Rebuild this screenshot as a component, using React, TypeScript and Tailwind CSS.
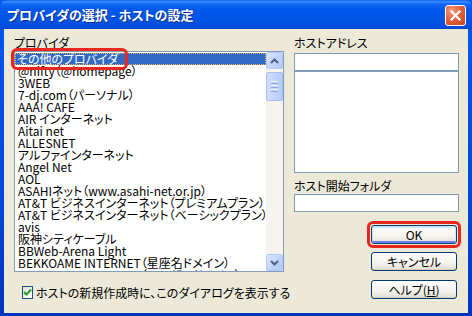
import React from "react";

const FONT = "font-['Noto_Sans_CJK_JP','Noto_Sans_CJK_SC',sans-serif] [font-feature-settings:'palt']";

const items = [
  "@nifty（@homepage）",
  "3WEB",
  "7-dj.com（パーソナル）",
  "AAA! CAFE",
  "AIR インターネット",
  "Aitai net",
  "ALLESNET",
  "アルファインターネット",
  "Angel Net",
  "AOL",
  "ASAHIネット（www.asahi-net.or.jp）",
  "AT&T ビジネスインターネット（プレミアムプラン）",
  "AT&T ビジネスインターネット（ベーシックプラン）",
  "avis",
  "阪神シティケーブル",
  "BBWeb-Arena Light",
  "BEKKOAME INTERNET（星座名ドメイン）",
  "BEKKOAME INTERNET（ユーザードメイン）",
];

function ScrollBtn({ down }: { down?: boolean }) {
  return (
    <div className="h-[17px] w-[17px] rounded-[2px] border border-[#B4C8F6] bg-[linear-gradient(135deg,#DCE6FE_0%,#C3D4FC_50%,#B2C7F8_100%)] flex items-center justify-center">
      <svg width="9" height="6" viewBox="0 0 9 6">
        {down ? (
          <path d="M1 1 L4.5 4.5 L8 1" stroke="#4D6185" strokeWidth="2" fill="none" />
        ) : (
          <path d="M1 5 L4.5 1.5 L8 5" stroke="#4D6185" strokeWidth="2" fill="none" />
        )}
      </svg>
    </div>
  );
}

function ScrollBar() {
  return (
    <div className="w-[17px] h-full flex flex-col bg-[#F5F4EF]">
      <ScrollBtn />
      <div className="mt-[3px] h-[29px] w-[17px] rounded-[2px] border border-[#A8BEEF] bg-[linear-gradient(90deg,#D0DDFD_0%,#C4D5FC_50%,#B8CBF9_100%)] flex flex-col items-center justify-center gap-[1px]">
        <div className="w-[7px] h-[1px] bg-[#EEF3FF]" />
        <div className="w-[7px] h-[1px] bg-[#8CA5E2]" />
        <div className="w-[7px] h-[1px] bg-[#EEF3FF]" />
        <div className="w-[7px] h-[1px] bg-[#8CA5E2]" />
        <div className="w-[7px] h-[1px] bg-[#EEF3FF]" />
        <div className="w-[7px] h-[1px] bg-[#8CA5E2]" />
      </div>
      <div className="flex-1" />
      <ScrollBtn down />
    </div>
  );
}

function XPButton({ children, def }: { children: React.ReactNode; def?: boolean }) {
  return (
    <div
      className={
        "h-[19px] w-[86px] rounded-[3px] border border-[#003C74] bg-[linear-gradient(180deg,#FFFFFF_0%,#F4F3EE_60%,#E6E3D9_90%,#D6D0C5_100%)] flex items-center justify-center text-[12px] leading-[12px] text-black " +
        (def
          ? "shadow-[inset_0_1px_0_1px_#CEE7FF,inset_0_-1px_0_1px_#6982EE]"
          : "shadow-[inset_0_-1px_0_0_#D6D0C5]")
      }
    >
      {children}
    </div>
  );
}

export default function App() {
  return (
    <div className={"w-[472px] h-[316px] flex flex-col bg-[linear-gradient(180deg,#0058EE_0%,#0049DA_60%,#0035BC_100%)] text-black " + FONT}>
      {/* Title bar */}
      <div className="h-[29px] flex items-start rounded-t-[7px] bg-[linear-gradient(180deg,#0A5DEC_0%,#3C8FFD_6%,#1467F5_14%,#0058EE_30%,#0055E8_60%,#0050E0_85%,#0046D2_100%)]">
        <div className="pl-[7px] pt-[7px] text-[13px] leading-[15px] font-bold text-white [text-shadow:1px_1px_0_#0B2C8A]">
          プロバイダの選択 - ホストの設定
        </div>
        <div className="flex-1" />
        <div className="mt-[5px] mr-[6px] h-[21px] w-[21px] rounded-[3px] border border-white bg-[radial-gradient(circle_at_30%_25%,#F29D7E_0%,#E2623C_45%,#C8401B_100%)] flex items-center justify-center">
          <svg width="11" height="11" viewBox="0 0 11 11">
            <path d="M1.5 1.5 L9.5 9.5 M9.5 1.5 L1.5 9.5" stroke="white" strokeWidth="2.2" strokeLinecap="square" />
          </svg>
        </div>
      </div>

      {/* Client area */}
      <div className="flex-1 mx-[4px] mb-[3px] bg-[#ECE9D8] flex items-start gap-[10px] pl-[10px] pr-[9px] pt-[8px]">
        {/* Left column */}
        <div className="relative w-[270px] flex flex-col">
          <div className="h-[12px] text-[12px] leading-[12px]">プロバイダ</div>
          <div className="mt-[2px] h-[221px] border border-[#7F9DB9] bg-white flex">
            <div className="flex-1 overflow-hidden pt-[1px] text-[12px] leading-[12px]">
              <div className="h-[12px] bg-[#316AC5] text-white pl-[2px] outline-1 outline-dotted outline-[#E5B25B] -outline-offset-1 whitespace-nowrap">
                その他のプロバイダ
              </div>
              {items.map((t) => (
                <div key={t} className="h-[12px] pl-[3px] whitespace-nowrap">
                  {t}
                </div>
              ))}
            </div>
            <ScrollBar />
          </div>
          <div className="absolute left-[-3px] top-[11px] w-[117px] h-[22px] border-[3px] border-[#E8261C] rounded-[6px]" />

          <div className="mt-[14px] ml-[8px] flex items-center gap-[3px]">
            <div className="h-[13px] w-[13px] border border-[#1C5180] bg-[linear-gradient(135deg,#DCDCD7_0%,#F5F5F2_60%,#FFFFFF_100%)] flex items-center justify-center">
              <svg width="9" height="9" viewBox="0 0 9 9">
                <path d="M1 4 L3.5 6.5 L8 1.5" stroke="#21A121" strokeWidth="2" fill="none" />
              </svg>
            </div>
            <div className="text-[12px] leading-[12px] whitespace-nowrap">ホストの新規作成時に、このダイアログを表示する</div>
          </div>
        </div>

        {/* Right column */}
        <div className="w-[165px] flex flex-col">
          <div className="h-[12px] text-[12px] leading-[12px]">ホストアドレス</div>
          <div className="mt-[4px] h-[18px] border border-[#7F9DB9] bg-white" />
          <div className="h-[102px] border border-[#7F9DB9] bg-white" />
          <div className="mt-[7px] h-[12px] text-[12px] leading-[12px]">ホスト開始フォルダ</div>
          <div className="mt-[2px] h-[18px] border border-[#7F9DB9] bg-white" />
          <div className="self-end mr-[2px] mt-[13px] relative">
            <XPButton def>OK</XPButton>
            <div className="absolute -left-[4px] -top-[4px] -right-[4px] -bottom-[4px] border-[3px] border-[#E8261C] rounded-[6px]" />
          </div>
          <div className="self-end mr-[2px] mt-[8px]">
            <XPButton>キャンセル</XPButton>
          </div>
          <div className="self-end mr-[2px] mt-[9px]">
            <XPButton>
              <span>
                ヘルプ(<span className="underline">H</span>)
              </span>
            </XPButton>
          </div>
        </div>
      </div>
    </div>
  );
}
